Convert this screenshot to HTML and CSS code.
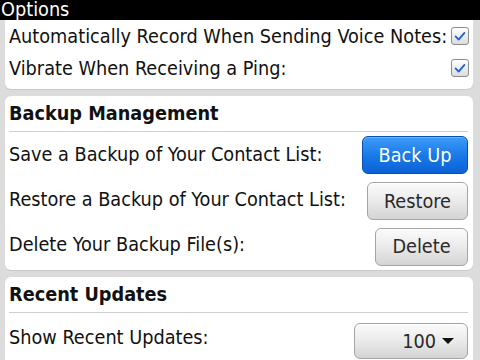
FILE: index.html
```html
<!DOCTYPE html>
<html>
<head>
<meta charset="utf-8">
<link rel="stylesheet" href="styles.css">
</head>
<body>
<div class="titlebar">Options</div>
<main class="content">
  <section class="card card-first">
    <div class="row check-row">
      <span class="label">Automatically Record When Sending Voice Notes:</span>
      <span class="checkbox"><svg viewBox="0 0 18 18" width="18" height="18"><path d="M4 9.5 L7.5 13 L14 5.5" fill="none" stroke="#1c5fd0" stroke-width="2" stroke-linecap="round" stroke-linejoin="round"/></svg></span>
    </div>
    <div class="row check-row">
      <span class="label">Vibrate When Receiving a Ping:</span>
      <span class="checkbox"><svg viewBox="0 0 18 18" width="18" height="18"><path d="M4 9.5 L7.5 13 L14 5.5" fill="none" stroke="#1c5fd0" stroke-width="2" stroke-linecap="round" stroke-linejoin="round"/></svg></span>
    </div>
  </section>

  <section class="card">
    <h2 class="card-title">Backup Management</h2>
    <div class="row btn-row">
      <span class="label">Save a Backup of Your Contact List:</span>
      <button class="btn btn-primary btn-backup">Back Up</button>
    </div>
    <div class="row btn-row">
      <span class="label">Restore a Backup of Your Contact List:</span>
      <button class="btn btn-restore">Restore</button>
    </div>
    <div class="row btn-row">
      <span class="label">Delete Your Backup File(s):</span>
      <button class="btn btn-delete">Delete</button>
    </div>
  </section>

  <section class="card">
    <h2 class="card-title">Recent Updates</h2>
    <div class="row btn-row dropdown-row">
      <span class="label">Show Recent Updates:</span>
      <button class="btn btn-dropdown">100 <span class="caret"></span></button>
    </div>
  </section>
</main>
</body>
</html>
```

FILE: styles.css
```css
* { box-sizing: border-box; }
html, body {
  margin: 0;
  padding: 0;
  height: 360px;
  overflow: hidden;
}
body {
  background: #dcdcdc;
  font-family: "DejaVu Sans Condensed", "DejaVu Sans", sans-serif;
  font-size: 19.7px;
  color: #111;
}
.titlebar {
  height: 20px;
  background: #000;
  color: #fff;
  line-height: 20px;
  padding-left: 1px;
  position: relative;
  z-index: 1;
}
.content {
  display: flex;
  flex-direction: column;
  gap: 7px;
  padding: 0 7px 0 5px;
}
.card {
  background: #fff;
  border-radius: 6px;
  padding: 0 5px 3px 4px;
  box-shadow: 0 1px 0 #c9c9c9;
}
.card-first {
  border-radius: 0 0 6px 6px;
  padding: 0 4px 5px 4px;
}
.row {
  display: flex;
  align-items: center;
  justify-content: space-between;
}
.check-row {
  height: 32px;
}
.checkbox {
  width: 18px;
  height: 18px;
  border: 1px solid #8c8c8c;
  border-radius: 3px;
  background: linear-gradient(#ffffff, #dcdcdc);
  display: flex;
  align-items: center;
  justify-content: center;
}
.checkbox svg { display: block; }
.card-title {
  margin: 0;
  font-size: 19.7px;
  font-weight: bold;
  height: 36px;
  line-height: 34px;
  border-bottom: 1px solid #cfcfcf;
  padding-top: 1px;
}
.btn-row {
  height: 45px;
}
.btn {
  font-family: "DejaVu Sans Condensed", "DejaVu Sans", sans-serif;
  font-size: 19.7px;
  height: 38px;
  border-radius: 6px;
  border: 1px solid #a5a5a5;
  background: linear-gradient(#fbfbfb 0%, #ececec 45%, #d4d4d4 100%);
  color: #2a2a2a;
  padding: 0;
  box-shadow: inset 0 1px 0 #fff;
}
.btn-primary {
  background: linear-gradient(#3f9bf7 0%, #1a7ae8 50%, #0b62d6 100%);
  border-color: #0a4fb4;
  color: #fff;
  box-shadow: inset 0 1px 0 #6cb4ff;
}
.btn-backup { width: 106px; margin-top: 1px; }
.btn-restore { width: 101px; margin-top: 3px; }
.btn-delete { width: 93px; margin-top: 4px; }
.dropdown-row { height: 48px; }
.btn-dropdown {
  width: 114px;
  height: 36px;
  margin-top: 8px;
  text-align: right;
  padding-right: 13px;
  display: flex;
  align-items: center;
  justify-content: flex-end;
  gap: 6px;
}
.caret {
  width: 0;
  height: 0;
  border-left: 6px solid transparent;
  border-right: 6px solid transparent;
  border-top: 6px solid #111;
}
```
